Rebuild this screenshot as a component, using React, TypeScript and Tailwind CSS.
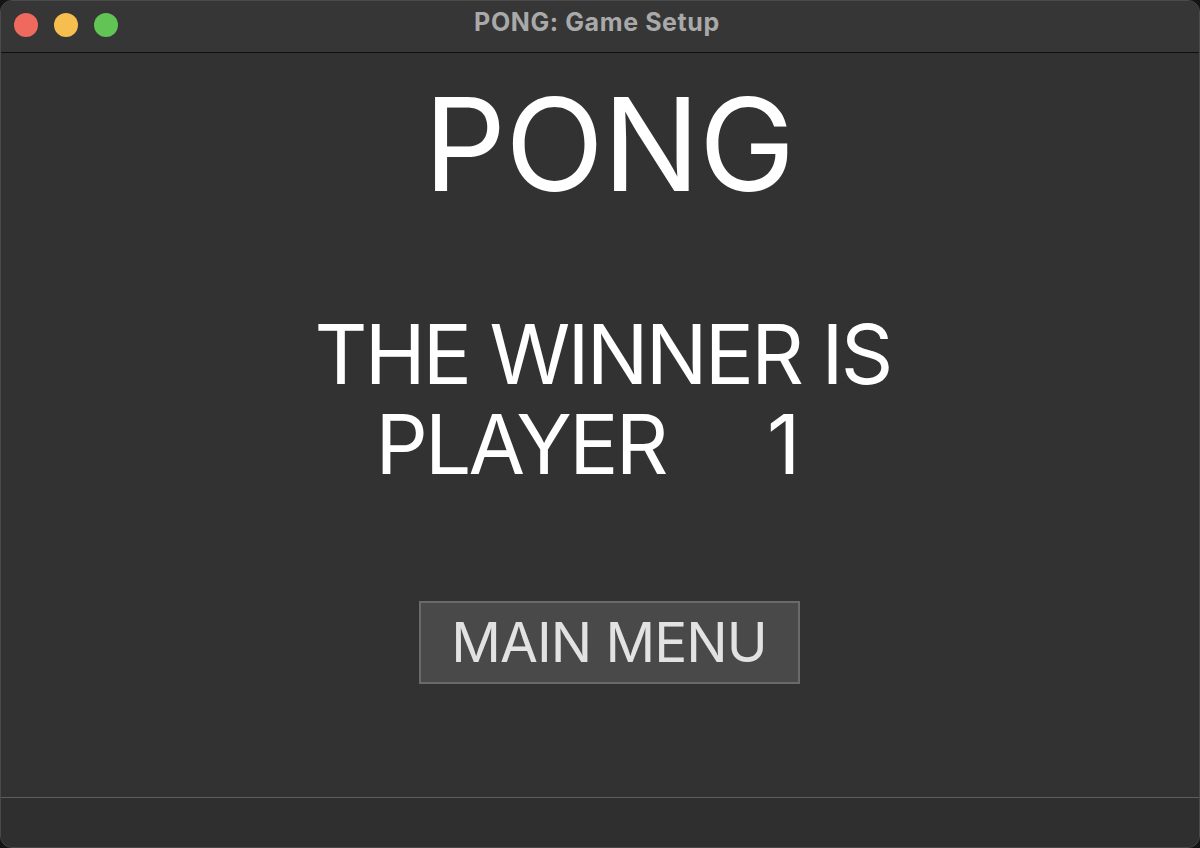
export default function App() {
  return (
    <div className="w-[1200px] h-[848px] bg-[#141414]" style={{ fontFamily: "Inter, 'Noto Sans', sans-serif" }}>
      <div className="w-full h-full flex flex-col rounded-[12px] overflow-hidden bg-[#323232] border border-[#4a4a4a]">
        {/* Title bar */}
        <div className="relative h-[52px] shrink-0 bg-[#363636] border-b border-[#0e0e0e] flex items-center justify-center pb-[8px]">
          <div className="absolute left-[13px] top-[12px] flex gap-[16px]">
            <span className="w-[24px] h-[24px] rounded-full bg-[#ee6a5f]" />
            <span className="w-[24px] h-[24px] rounded-full bg-[#f5be4f]" />
            <span className="w-[24px] h-[24px] rounded-full bg-[#61c454]" />
          </div>
          <span className="text-[25px] font-bold text-[#a9a9a9] tracking-[0.6px] pr-[6px]">PONG: Game Setup</span>
        </div>

        {/* Content */}
        <div className="flex-1 flex flex-col items-center text-white pl-[18px]">
          <h1 className="mt-[27px] text-[129px] leading-none font-normal tracking-[-1px]">PONG</h1>
          <div className="mt-[101px] pr-[13px] text-[82px] leading-[90px] text-center tracking-[-2.8px]">
            <p>THE WINNER IS</p>
            <p className="whitespace-pre pr-[32px]">{"PLAYER     1"}</p>
          </div>
          <button className="mt-[111px] w-[381px] h-[83px] bg-[#494949] border-2 border-[#6a6a6a] text-[#e2e2e2] text-[55px] tracking-[-1px] flex items-center justify-center">
            MAIN MENU
          </button>
        </div>

        {/* Bottom bar */}
        <div className="h-[50px] shrink-0 bg-[#2f2f2f] border-t border-[#5e5e5e]" />
      </div>
    </div>
  );
}
